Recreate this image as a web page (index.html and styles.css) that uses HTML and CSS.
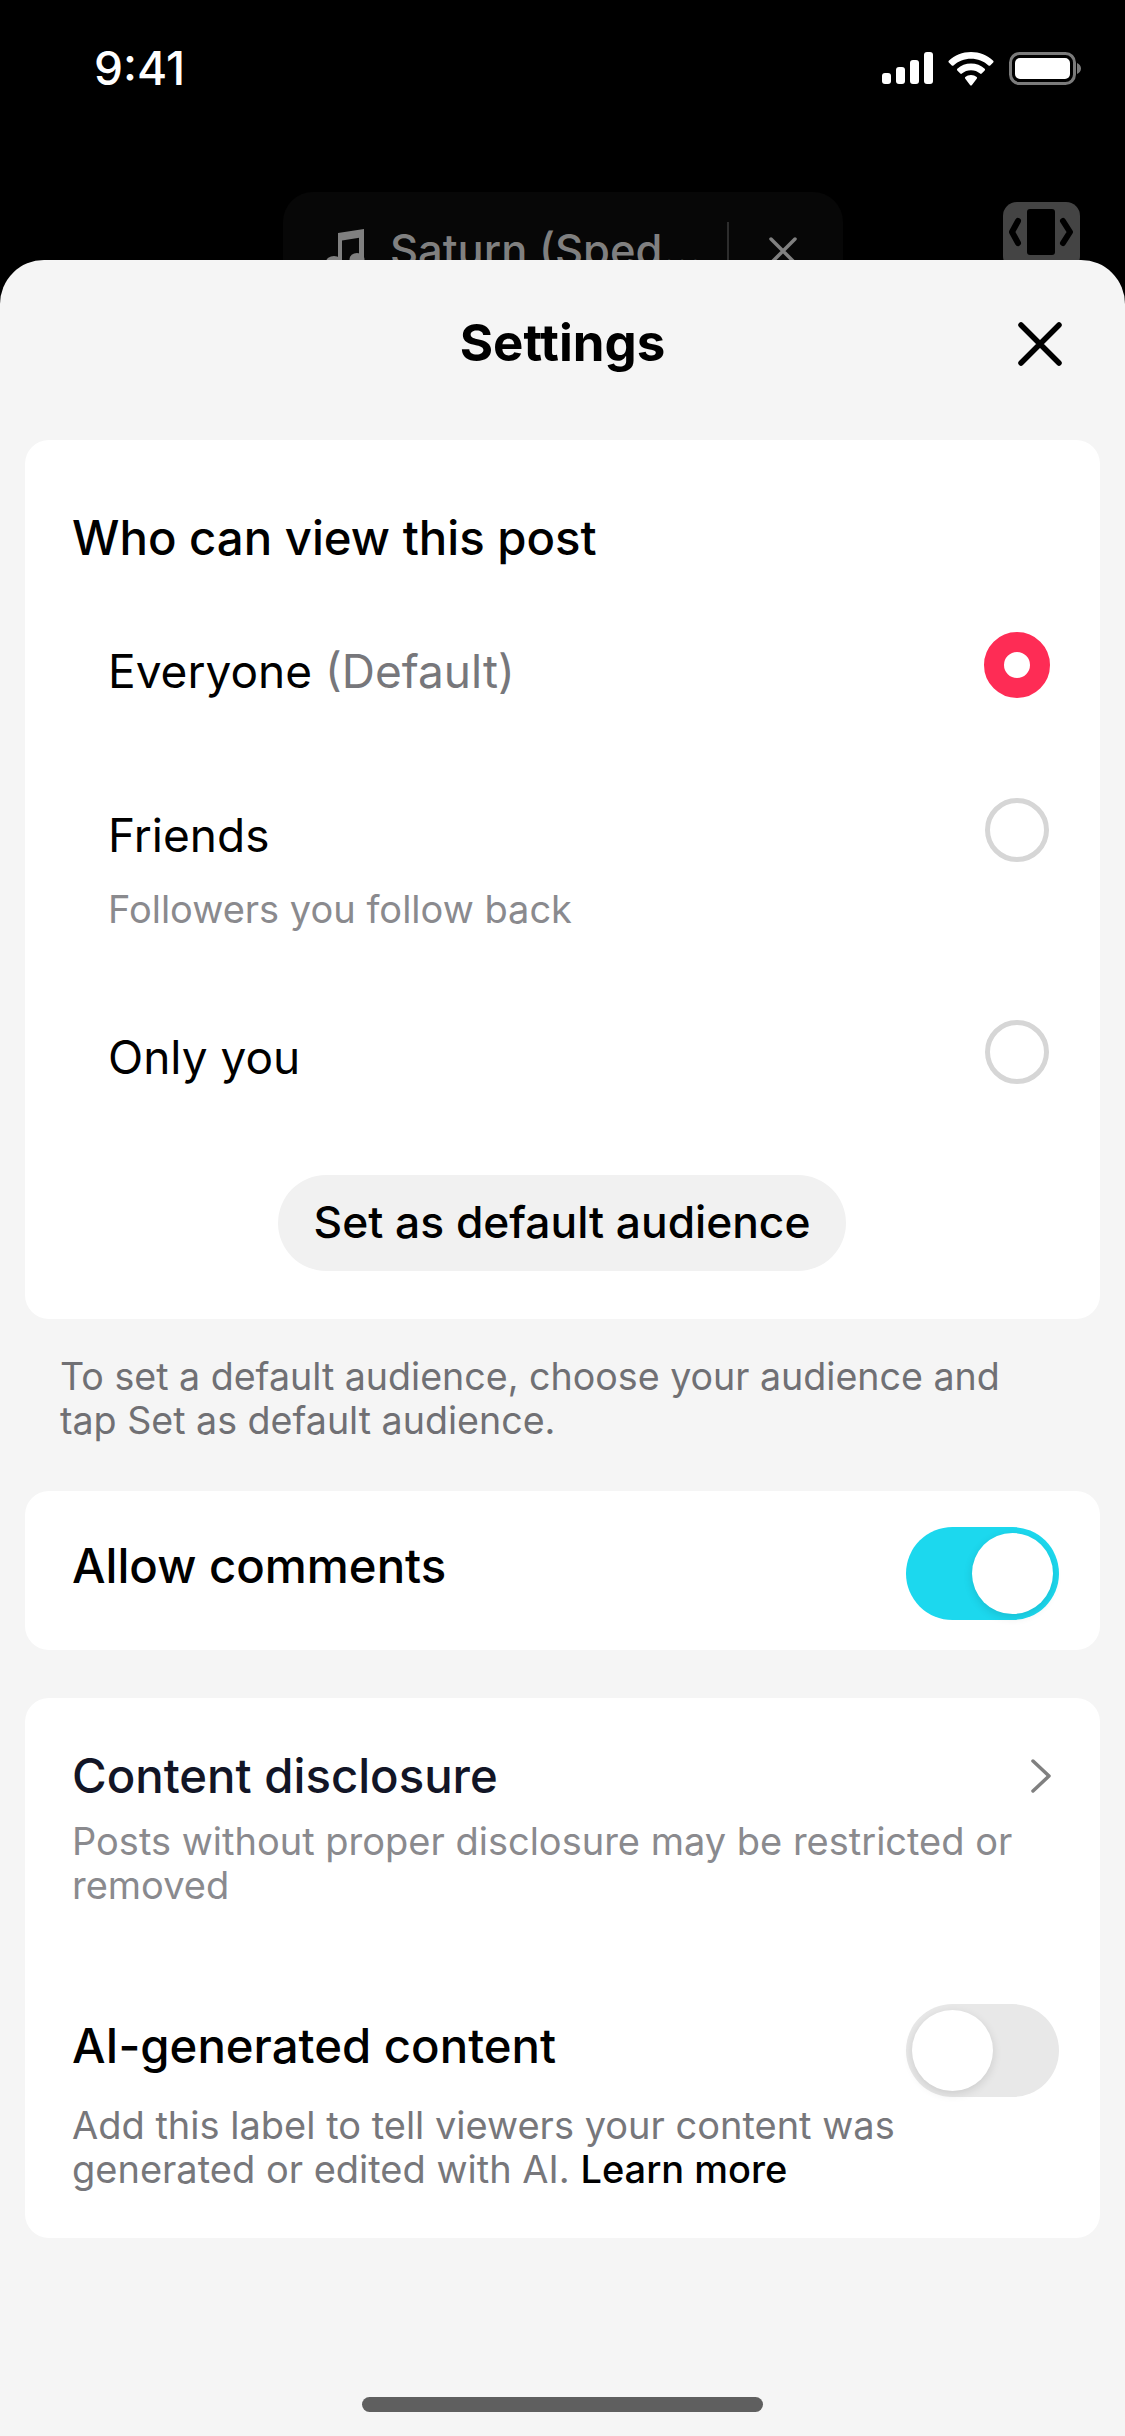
FILE: index.html
```html
<!DOCTYPE html>
<html>
<head>
    <title>Settings</title>
    <link rel="stylesheet" href="styles.css">
</head>
<body>
    <div class="top">
        <div class="statusbar">
            <span class="time">9:41</span>
            <div class="status-icons">
                <svg width="51" height="32" viewBox="0 0 51 32" fill="#fff">
                    <rect x="0" y="21" width="9" height="11" rx="3"/>
                    <rect x="14" y="15" width="9" height="17" rx="3"/>
                    <rect x="28" y="8" width="9" height="24" rx="3"/>
                    <rect x="42" y="0" width="9" height="32" rx="3"/>
                </svg>
                <svg width="46" height="34" viewBox="0 0 46 34" fill="#fff">
                    <path d="M23 0C14.500 0 6.700 3.300 0.800 8.700C0.300 9.200 0.300 9.900 0.800 10.400L3.800 13.400C4.300 13.900 5 13.900 5.500 13.400C10.300 9.100 16.300 6.700 23 6.700C29.700 6.700 35.700 9.100 40.500 13.400C41 13.900 41.700 13.900 42.200 13.400L45.200 10.400C45.700 9.900 45.700 9.200 45.200 8.700C39.300 3.300 31.500 0 23 0Z"/>
                    <path d="M23 11.600C17.800 11.600 13 13.500 9.300 16.800C8.800 17.300 8.800 18 9.300 18.500L12.300 21.500C12.800 22 13.400 22 13.900 21.600C16.400 19.500 19.500 18.300 23 18.300C26.500 18.300 29.600 19.500 32.100 21.600C32.600 22 33.200 22 33.700 21.500L36.700 18.500C37.200 18 37.200 17.300 36.700 16.800C33 13.500 28.200 11.600 23 11.600Z"/>
                    <path d="M23 23C20.800 23 18.800 23.800 17.300 25.100C16.800 25.600 16.800 26.300 17.300 26.800L22.200 33.200C22.700 33.700 23.300 33.700 23.800 33.200L28.700 26.800C29.200 26.300 29.200 25.600 28.700 25.100C27.200 23.800 25.200 23 23 23Z"/>
                </svg>
                <svg width="72" height="33" viewBox="0 0 72 33">
                    <rect x="1.500" y="1.500" width="64" height="30" rx="9" fill="none" stroke="#7b7b7b" stroke-width="3"/>
                    <rect x="6" y="6" width="55" height="21" rx="5" fill="#fff"/>
                    <path d="M68 11C70.500 12 72 14 72 16.500C72 19 70.500 21 68 22Z" fill="#7b7b7b"/>
                </svg>
            </div>
        </div>
        <div class="controls">
            <div class="sound-pill">
                <svg class="note" width="42" height="44" viewBox="0 0 42 44" fill="#808080">
                    <path d="M12 5L38 1V9L16 12.500V34H12Z"/>
                    <path d="M33 2H38V31H33Z"/>
                    <ellipse cx="8" cy="34" rx="8" ry="6"/>
                    <ellipse cx="31" cy="31" rx="7.500" ry="6"/>
                </svg>
                <span class="sound-name">Saturn (Sped...</span>
                <span class="sound-line"></span>
                <svg class="sound-x" width="28" height="28" viewBox="0 0 28 28" stroke="#808080" stroke-width="3.500" stroke-linecap="round">
                    <path d="M2 2L26 26M26 2L2 26"/>
                </svg>
            </div>
            <div class="flip">
                <svg width="77" height="58" viewBox="0 0 77 58">
                    <rect x="24" y="7" width="28" height="46" rx="3" fill="#000"/>
                    <path d="M15 19L9 30L15 41M60 19L67 30L60 41" fill="none" stroke="#000" stroke-width="6" stroke-linecap="round" stroke-linejoin="round"/>
                </svg>
            </div>
        </div>
    </div>

    <div class="sheet">
        <div class="sheet-head">
            <h1>Settings</h1>
            <svg class="close" width="44" height="44" viewBox="0 0 44 44" stroke="#000" stroke-width="5.500" stroke-linecap="round">
                <path d="M3 3L41 41M41 3L3 41"/>
            </svg>
        </div>

        <div class="card audience">
            <h2>Who can view this post</h2>
            <div class="option first">
                <div class="option-text"><span class="option-name">Everyone <span class="muted">(Default)</span></span></div>
                <span class="radio checked"></span>
            </div>
            <div class="option second">
                <div class="option-text">
                    <span class="option-name">Friends</span>
                    <p class="option-sub">Followers you follow back</p>
                </div>
                <span class="radio"></span>
            </div>
            <div class="option third">
                <div class="option-text"><span class="option-name">Only you</span></div>
                <span class="radio"></span>
            </div>
            <button class="default-btn" type="button">Set as default audience</button>
        </div>

        <p class="helper">To set a default audience, choose your audience and<br>tap Set as default audience.</p>

        <div class="card comments">
            <h2>Allow comments</h2>
            <span class="toggle on"><span class="knob"></span></span>
        </div>

        <div class="card disclosure">
            <div class="line-row">
                <h2 class="navy">Content disclosure</h2>
                <svg class="chevron" width="20" height="34" viewBox="0 0 20 34" fill="none" stroke="#808080" stroke-width="3.500" stroke-linecap="round" stroke-linejoin="round">
                    <path d="M2 2L18 17L2 32"/>
                </svg>
            </div>
            <p class="desc light">Posts without proper disclosure may be restricted or<br>removed</p>

            <div class="ai-row">
                <h2>AI-generated content</h2>
                <span class="toggle"><span class="knob"></span></span>
            </div>
            <p class="desc ai">Add this label to tell viewers your content was<br>generated or edited with AI. <a class="learn" href="#">Learn more</a></p>
        </div>

        <div class="home-bar"></div>
    </div>
</body>
</html>
```

FILE: styles.css
```css
* {
    box-sizing: border-box;
}

html,
body {
    margin: 0;
    padding: 0;
}

body {
    width: 1125px;
    height: 2436px;
    background-color: #000;
    font-family: Inter, "Liberation Sans", sans-serif;
    display: flex;
    flex-direction: column;
    overflow: hidden;
}

h1,
h2,
p {
    margin: 0;
}

/* dark area behind the sheet */
.top {
    height: 260px;
    overflow: hidden;
    flex-shrink: 0;
}

.statusbar {
    height: 192px;
    padding: 44px 44px 0 94px;
    display: flex;
    justify-content: space-between;
    align-items: flex-start;
    color: #fff;
}

.time {
    font-size: 46px;
    font-weight: 500;
    line-height: 48px;
}

.status-icons {
    display: flex;
    align-items: flex-start;
    gap: 15px;
    padding-top: 8px;
}

.controls {
    display: flex;
    align-items: flex-start;
    padding-left: 283px;
}

.sound-pill {
    width: 560px;
    height: 120px;
    background-color: #070707;
    border-radius: 30px;
    padding: 36px 0 0 43px;
    display: flex;
    align-items: flex-start;
    color: #808080;
}

.sound-name {
    margin-left: 22px;
    width: 337px;
    font-size: 43.500px;
    font-weight: 500;
    line-height: 44px;
    white-space: nowrap;
}

.sound-line {
    width: 2px;
    height: 60px;
    margin-top: -6px;
    background-color: #2d2d2d;
}

.sound-x {
    margin: 9px 0 0 40px;
}

.flip {
    width: 77px;
    height: 68px;
    margin: 10px 0 0 160px;
    background-color: #444;
    border-radius: 14px;
}

/* bottom sheet */
.sheet {
    flex: 1;
    background-color: #f5f5f5;
    border-radius: 44px 44px 0 0;
    padding: 0 25px;
}

.sheet-head {
    position: relative;
    text-align: center;
    padding: 55px 0 69px;
}

.sheet-head h1 {
    font-size: 51px;
    font-weight: 700;
    line-height: 56px;
    color: #000;
}

/* close button sits over the centred title row */
.close {
    position: absolute;
    top: 62px;
    right: 38px;
}

.card {
    background-color: #fff;
    border-radius: 24px;
}

h2 {
    font-size: 47.300px;
    font-weight: 500;
    line-height: 56px;
    color: #000;
}

.audience {
    height: 879px;
    padding: 70px 51px 48px 47px;
}

.option {
    display: flex;
    justify-content: space-between;
    align-items: flex-start;
    padding-left: 36px;
}

.option-name {
    display: block;
    font-size: 46px;
    line-height: 56px;
    color: #000;
}

.muted {
    color: #77777b;
}

.option-sub {
    margin-top: 24px;
    font-size: 38px;
    line-height: 44px;
    color: #8a8a8e;
}

.option.first {
    margin-top: 66px;
}

.option.first .option-text {
    margin-top: 11px;
}

.option.second {
    margin-top: 99px;
}

.option.second .option-text,
.option.third .option-text {
    margin-top: 9px;
}

.option.third {
    margin-top: 89px;
}

.radio {
    width: 64px;
    height: 64px;
    border: 5px solid #d6d6d6;
    border-radius: 50%;
    background-color: #fff;
    flex-shrink: 0;
}

.radio.checked {
    width: 66px;
    height: 66px;
    border: 20px solid #fe2c55;
    margin-right: -1px;
}

.default-btn {
    display: block;
    width: 568px;
    height: 96px;
    margin: 90px 0 0 206px;
    padding: 0 0 2px;
    border: none;
    border-radius: 48px;
    background-color: #f1f1f1;
    font-family: inherit;
    font-size: 44.300px;
    font-weight: 500;
    color: #000;
}

.helper {
    margin: 36px 0 48px 35px;
    font-size: 37.600px;
    line-height: 44px;
    color: #707074;
}

.comments {
    height: 159px;
    padding: 36px 41px 0 47px;
    display: flex;
    justify-content: space-between;
    align-items: flex-start;
}

.comments h2 {
    margin-top: 11px;
}

.toggle {
    display: flex;
    width: 153px;
    height: 93px;
    padding: 6px;
    border-radius: 47px;
    background-color: #e8e8e8;
    flex-shrink: 0;
}

.toggle.on {
    justify-content: flex-end;
    background-color: #1cd8ee;
}

.knob {
    width: 81px;
    height: 81px;
    border-radius: 50%;
    background-color: #fff;
    box-shadow: 0 3px 10px rgba(0, 0, 0, 0.12);
}

.disclosure {
    height: 540px;
    margin-top: 48px;
    padding: 50px 41px 0 47px;
}

.line-row {
    display: flex;
    justify-content: space-between;
    align-items: center;
}

.navy {
    color: #121526;
}

.chevron {
    margin-right: 8px;
}

.desc {
    font-size: 38px;
    line-height: 44px;
}

.desc.light {
    margin-top: 15px;
    color: #8a8a8e;
}

.ai-row {
    display: flex;
    justify-content: space-between;
    align-items: flex-start;
    margin-top: 97px;
}

.ai-row h2 {
    margin-top: 14px;
}

.desc.ai {
    margin-top: 6px;
    color: #77777b;
}

.learn {
    color: #000;
    font-weight: 500;
    text-decoration: none;
}

.home-bar {
    width: 401px;
    height: 15px;
    margin: 159px auto 0;
    background-color: #5f5f5f;
    border-radius: 8px;
}
```
